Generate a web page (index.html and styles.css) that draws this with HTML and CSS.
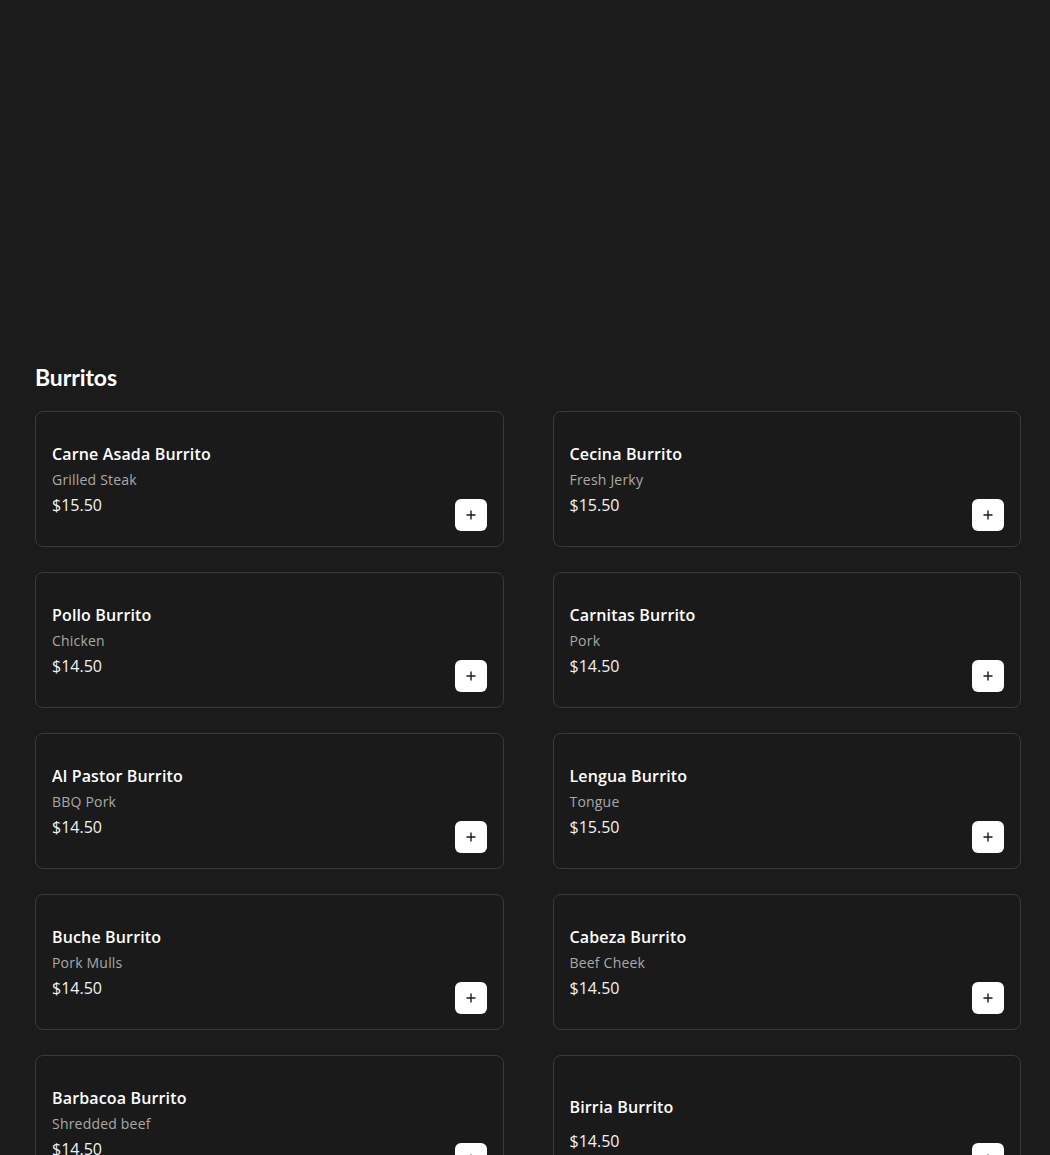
FILE: index.html
```html
<!DOCTYPE html>
<html lang="en">
<head>
<meta charset="utf-8">
<title>Burritos</title>
<link rel="stylesheet" href="styles.css">
</head>
<body>
<div class="hero"></div>
<section class="menu-section">
  <h2 class="section-title">Burritos</h2>
  <div class="grid">
    <div class="card"><div class="info"><div class="name">Carne Asada Burrito</div><div class="desc">Grilled Steak</div><div class="price">$15.50</div></div><button class="add" aria-label="Add"><svg viewBox="0 0 12 12" width="12" height="12"><path d="M6 1.5v9M1.5 6h9" stroke="#1b1b1b" stroke-width="1.4" fill="none"/></svg></button></div>
    <div class="card"><div class="info"><div class="name">Cecina Burrito</div><div class="desc">Fresh Jerky</div><div class="price">$15.50</div></div><button class="add" aria-label="Add"><svg viewBox="0 0 12 12" width="12" height="12"><path d="M6 1.5v9M1.5 6h9" stroke="#1b1b1b" stroke-width="1.4" fill="none"/></svg></button></div>
    <div class="card"><div class="info"><div class="name">Pollo Burrito</div><div class="desc">Chicken</div><div class="price">$14.50</div></div><button class="add" aria-label="Add"><svg viewBox="0 0 12 12" width="12" height="12"><path d="M6 1.5v9M1.5 6h9" stroke="#1b1b1b" stroke-width="1.4" fill="none"/></svg></button></div>
    <div class="card"><div class="info"><div class="name">Carnitas Burrito</div><div class="desc">Pork</div><div class="price">$14.50</div></div><button class="add" aria-label="Add"><svg viewBox="0 0 12 12" width="12" height="12"><path d="M6 1.5v9M1.5 6h9" stroke="#1b1b1b" stroke-width="1.4" fill="none"/></svg></button></div>
    <div class="card"><div class="info"><div class="name">Al Pastor Burrito</div><div class="desc">BBQ Pork</div><div class="price">$14.50</div></div><button class="add" aria-label="Add"><svg viewBox="0 0 12 12" width="12" height="12"><path d="M6 1.5v9M1.5 6h9" stroke="#1b1b1b" stroke-width="1.4" fill="none"/></svg></button></div>
    <div class="card"><div class="info"><div class="name">Lengua Burrito</div><div class="desc">Tongue</div><div class="price">$15.50</div></div><button class="add" aria-label="Add"><svg viewBox="0 0 12 12" width="12" height="12"><path d="M6 1.5v9M1.5 6h9" stroke="#1b1b1b" stroke-width="1.4" fill="none"/></svg></button></div>
    <div class="card"><div class="info"><div class="name">Buche Burrito</div><div class="desc">Pork Mulls</div><div class="price">$14.50</div></div><button class="add" aria-label="Add"><svg viewBox="0 0 12 12" width="12" height="12"><path d="M6 1.5v9M1.5 6h9" stroke="#1b1b1b" stroke-width="1.4" fill="none"/></svg></button></div>
    <div class="card"><div class="info"><div class="name">Cabeza Burrito</div><div class="desc">Beef Cheek</div><div class="price">$14.50</div></div><button class="add" aria-label="Add"><svg viewBox="0 0 12 12" width="12" height="12"><path d="M6 1.5v9M1.5 6h9" stroke="#1b1b1b" stroke-width="1.4" fill="none"/></svg></button></div>
    <div class="card"><div class="info"><div class="name">Barbacoa Burrito</div><div class="desc">Shredded beef</div><div class="price">$14.50</div></div><button class="add" aria-label="Add"><svg viewBox="0 0 12 12" width="12" height="12"><path d="M6 1.5v9M1.5 6h9" stroke="#1b1b1b" stroke-width="1.4" fill="none"/></svg></button></div>
    <div class="card"><div class="info"><div class="name">Birria Burrito</div><div class="desc"></div><div class="price">$14.50</div></div><button class="add" aria-label="Add"><svg viewBox="0 0 12 12" width="12" height="12"><path d="M6 1.5v9M1.5 6h9" stroke="#1b1b1b" stroke-width="1.4" fill="none"/></svg></button></div>
  </div>
</section>
</body>
</html>
```
FILE: styles.css
```css
html, body {
  margin: 0;
  padding: 0;
  background: #1b1b1b;
  color: #ffffff;
  font-family: "Open Sans", "Liberation Sans", sans-serif;
}

.hero {
  height: 340px;
}

.menu-section {
  padding: 0 29px 40px 35px;
}

.section-title {
  margin: 0 0 19px;
  font-family: "Lato", "Open Sans", sans-serif;
  font-size: 23px;
  font-weight: 700;
  line-height: 30px;
  letter-spacing: -0.1px;
  padding-top: 22px;
}

.grid {
  display: grid;
  grid-template-columns: 1fr 1fr;
  column-gap: 49px;
  row-gap: 25px;
}

.card {
  box-sizing: border-box;
  height: 136px;
  border: 1px solid #3a3a3a;
  border-radius: 8px;
  background: #1a1a1a;
  padding: 16px 16px 15px;
  display: flex;
  align-items: center;
  justify-content: space-between;
}

.info {
  display: flex;
  flex-direction: column;
  gap: 5px;
}

.name {
  font-size: 16px;
  font-weight: 600;
  line-height: 24px;
  letter-spacing: 0.15px;
}

.desc {
  font-size: 14px;
  line-height: 17px;
  color: #a9a9a9;
  letter-spacing: 0.2px;
}

.price {
  font-size: 16px;
  line-height: 24px;
  color: #f2f2f2;
}

.add {
  align-self: flex-end;
  width: 32px;
  height: 32px;
  padding: 0;
  border: none;
  border-radius: 6px;
  background: #ffffff;
  display: flex;
  align-items: center;
  justify-content: center;
  cursor: pointer;
}
```
